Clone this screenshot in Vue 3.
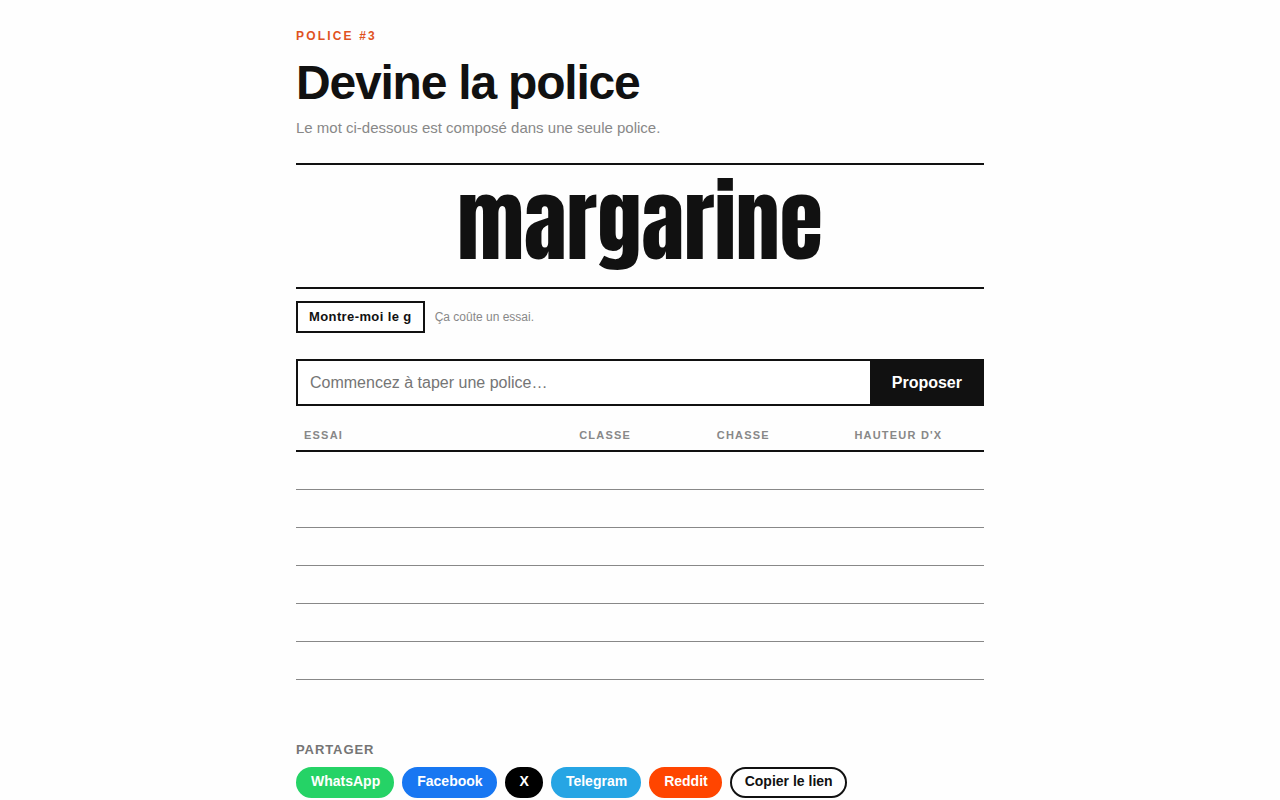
<script setup>
import { ref } from 'vue'

const guess = ref('')
const columns = ['Essai', 'Classe', 'Chasse', "Hauteur d'x"]
const rowCount = 6
const networks = [
  { name: 'WhatsApp', key: 'whatsapp' },
  { name: 'Facebook', key: 'facebook' },
  { name: 'X', key: 'x' },
  { name: 'Telegram', key: 'telegram' },
  { name: 'Reddit', key: 'reddit' },
]
</script>

<template>
  <main class="page">
    <header>
      <p class="kicker">Police #3</p>
      <h1>Devine la police</h1>
      <p class="intro">Le mot ci-dessous est composé dans une seule police.</p>
    </header>

    <div class="specimen">margarine</div>

    <div class="hint">
      <button type="button" class="reveal">Montre-moi le g</button>
      <span class="cost">Ça coûte un essai.</span>
    </div>

    <form class="guess" @submit.prevent>
      <input v-model="guess" type="text" aria-label="Police" placeholder="Commencez à taper une police…" autocomplete="off" />
      <button type="submit">Proposer</button>
    </form>

    <table>
      <thead>
        <tr>
          <th v-for="c in columns" :key="c" scope="col">{{ c }}</th>
        </tr>
      </thead>
      <tbody>
        <tr v-for="n in rowCount" :key="n">
          <td v-for="c in columns" :key="c"></td>
        </tr>
      </tbody>
    </table>

    <section class="share">
      <h2>Partager</h2>
      <div class="pills">
        <a v-for="n in networks" :key="n.key" href="#" class="pill" :class="n.key">{{ n.name }}</a>
        <button type="button" class="pill copy">Copier le lien</button>
      </div>
    </section>
  </main>
</template>

<style>
body {
  background: #fefefe;
}
</style>

<style scoped>
.page {
  box-sizing: border-box;
  max-width: 720px;
  margin: 0 auto;
  padding: 28px 16px 0;
  color: #111;
  font-family: "Liberation Sans", Arial, sans-serif;
}
.kicker {
  margin: 0;
  color: #e0531f;
  font-size: 12px;
  line-height: 16px;
  font-weight: 700;
  letter-spacing: 0.18em;
  text-transform: uppercase;
}
h1 {
  margin: 12px 0 10px;
  font-size: 48px;
  line-height: 54px;
  font-weight: 700;
  letter-spacing: -0.025em;
}
.intro {
  margin: 0;
  color: #888;
  font-size: 15px;
  line-height: 16px;
}
.specimen {
  margin-top: 27px;
  padding-bottom: 8px;
  border-top: 2px solid #111;
  border-bottom: 2px solid #111;
  font-family: Anton, Impact, "Liberation Sans Narrow", sans-serif;
  font-size: 88px;
  line-height: 114px;
  font-weight: 400;
  text-align: center;
}
.hint {
  display: flex;
  align-items: center;
  gap: 10px;
  margin-top: 12px;
}
.reveal {
  padding: 6px 11px;
  border: 2px solid #111;
  background: #fff;
  color: #111;
  font: 700 13px/16px "Liberation Sans", Arial, sans-serif;
  letter-spacing: 0.03em;
}
.cost {
  color: #888;
  font-size: 12px;
}
.guess {
  display: flex;
  margin-top: 26px;
  border: 2px solid #111;
}
.guess input {
  flex: 1;
  min-width: 0;
  padding: 12px;
  border: 0;
  outline: 0;
  background: #fff;
  color: #111;
  font: 16px/19px "Liberation Sans", Arial, sans-serif;
}
.guess input::placeholder {
  color: #757575;
}
.guess button {
  padding: 0 20px 0 22px;
  border: 0;
  background: #111;
  color: #fff;
  font: 700 16px/19px "Liberation Sans", Arial, sans-serif;
}
table {
  width: 100%;
  margin-top: 20px;
  border-collapse: collapse;
  table-layout: fixed;
}
th {
  box-sizing: border-box;
  width: 20%;
  padding: 2px 8px 8px;
  border-bottom: 2px solid #111;
  color: #888;
  font-size: 11px;
  line-height: 14px;
  letter-spacing: 0.11em;
  text-align: left;
  text-transform: uppercase;
}
th:first-child {
  width: 40%;
}
td {
  height: 37px;
  padding: 0;
  border-bottom: 1px solid #888;
}
.share {
  margin-top: 62px;
}
h2 {
  margin: 0 0 10px;
  color: #757575;
  font-size: 13px;
  line-height: 15px;
  letter-spacing: 0.07em;
  text-transform: uppercase;
}
.pills {
  display: flex;
  flex-wrap: wrap;
  gap: 8px;
}
.pill {
  box-sizing: border-box;
  padding: 4px 12px 7px 13px;
  border: 2px solid transparent;
  border-radius: 16px;
  color: #fff;
  font: 700 14px/16px "Liberation Sans", Arial, sans-serif;
  text-decoration: none;
}
.whatsapp {
  background: #25d366;
  border-color: #25d366;
}
.facebook {
  background: #1877f2;
  border-color: #1877f2;
}
.x {
  background: #000;
  border-color: #000;
}
.telegram {
  background: #26a5e4;
  border-color: #26a5e4;
}
.reddit {
  background: #ff4500;
  border-color: #ff4500;
}
.copy {
  background: #fff;
  border-color: #111;
  color: #111;
}
</style>
